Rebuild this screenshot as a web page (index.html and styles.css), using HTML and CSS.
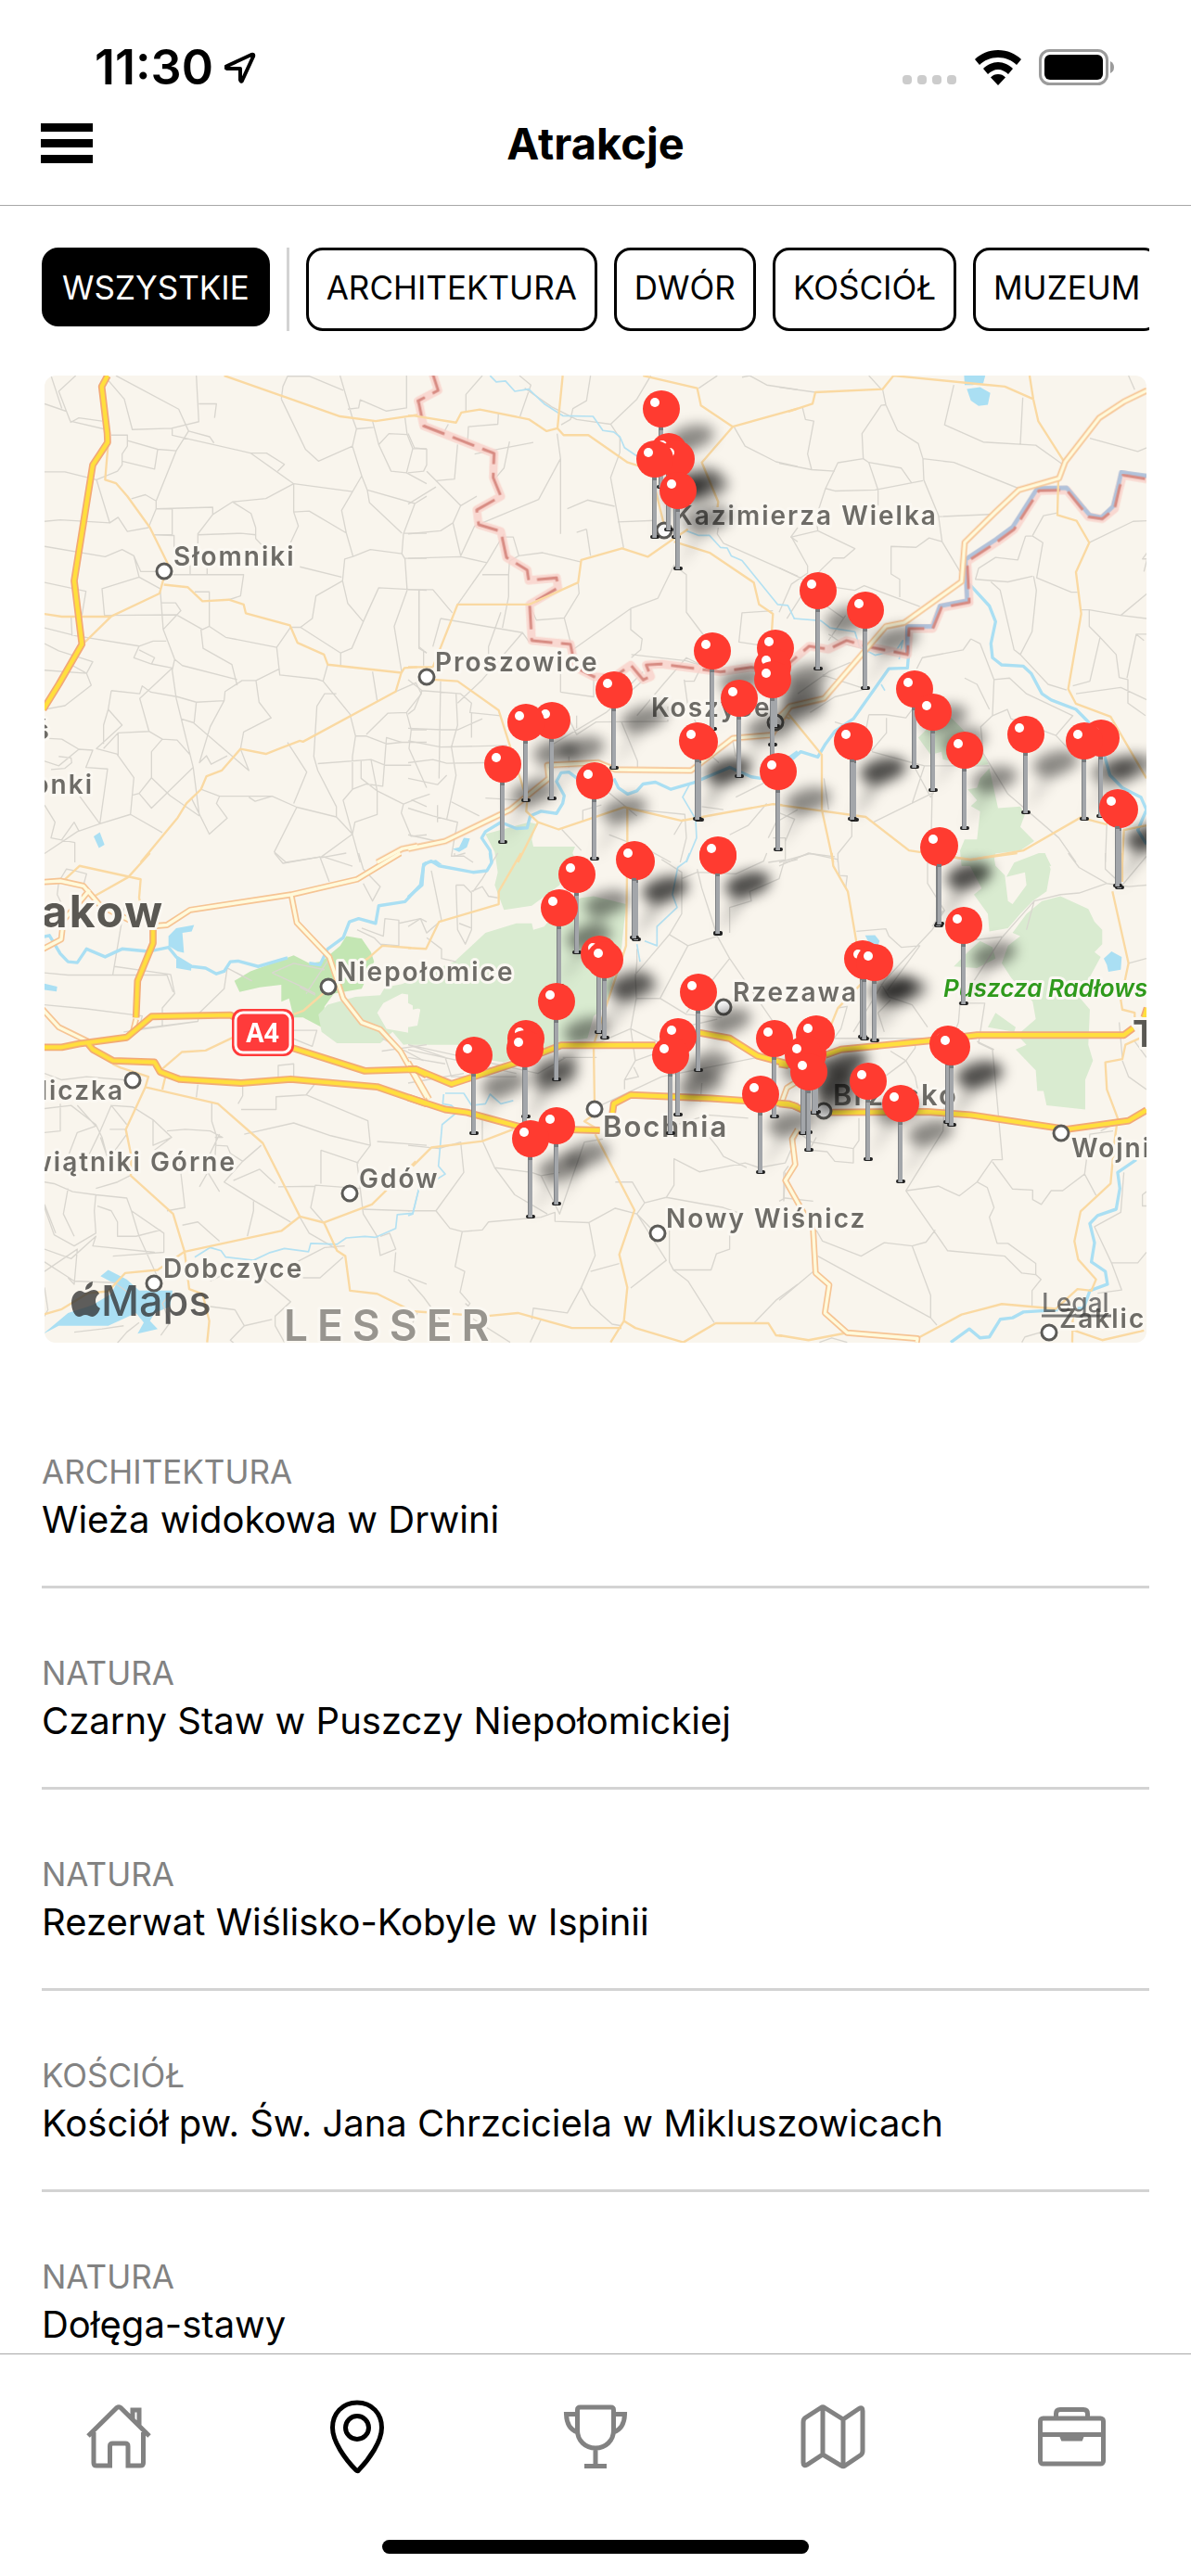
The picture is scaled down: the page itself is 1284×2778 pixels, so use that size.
FILE: index.html
```html
<!DOCTYPE html>
<html lang="pl">
<head>
<meta charset="utf-8">
<meta name="viewport" content="width=device-width, initial-scale=1">
<title>Atrakcje</title>
<link rel="stylesheet" href="styles.css">
</head>
<body>
<div class="app">
  <header class="header">
    <div class="status">
      <div class="status-left">
        <span class="time">11:30</span>
        <svg class="icon-location" viewBox="0 0 34 34" aria-hidden="true"><path d="M2 15.500L29 3Q32 2 31 5L19 31Q18 33 17 30V18H3Q0 17 2 15.500z"/></svg>
      </div>
      <div class="status-right">
        <div class="dots"><i></i><i></i><i></i><i></i></div>
        <svg class="icon-wifi" viewBox="0 0 52 38" aria-hidden="true">
          <path d="M26 0C36 0 45 4 51 10L46 16C41 11 34 8 26 8S11 11 6 16L1 10C7 4 16 0 26 0z"/>
          <path d="M26 13C32 13 38 16 42 20L37 26C34 23 30 21 26 21S18 23 15 26L10 20C14 16 20 13 26 13z"/>
          <path d="M26 26C29 26 32 27 34 29.500L26 38L18 29.500C20 27 23 26 26 26z"/>
        </svg>
        <svg class="icon-battery" viewBox="0 0 82 40" aria-hidden="true">
          <rect x="1.500" y="1.500" width="72" height="36" rx="10" fill="none" stroke="#9b9b9b" stroke-width="3"/>
          <rect x="6" y="6" width="63" height="27" rx="6"/>
          <path d="M77 13Q81 15 81 19.500T77 26z" fill="#9b9b9b"/>
        </svg>
      </div>
    </div>
    <div class="nav">
      <button class="menu" type="button" aria-label="Menu"><i></i><i></i><i></i></button>
      <h1>Atrakcje</h1>
    </div>
  </header>

  <main class="main">
    <div class="filters">
      <button class="chip chip-active" type="button">WSZYSTKIE</button>
      <span class="divider"></span>
      <button class="chip" type="button">ARCHITEKTURA</button>
      <button class="chip" type="button">DWÓR</button>
      <button class="chip" type="button">KOŚCIÓŁ</button>
      <button class="chip" type="button">MUZEUM</button>
    </div>

    <svg class="map" viewBox="48 405 1188 1043" role="img" aria-label="Mapa atrakcji">
      <defs>
        <g id="motorways">
          <path transform="translate(40 400) scale(.3333 .338)" d="M228 15L209 50L227 200L228 228L180 300L120 670L145 872L70 1000L20 1080"/>
          <path transform="translate(40 920) scale(.3333 .3444)" d="M0 608H80L135 597L290 577L370 512L625 507L650 520M825 610L1060 682L1225 677L1260 695M165 597L180 615L245 650L380 655L398 685L460 708L660 720L820 708L1100 732L1170 755L1260 785M375 240V282L325 400L320 515"/>
          <path transform="translate(440 920) scale(.3333 .3444)" d="M0 677H25L140 723L340 660L495 602H800M940 562L1040 580L1130 635L1260 668M0 765L120 803L190 812L380 862L620 868M660 820L665 785L720 757L980 768L1230 785L1260 795"/>
          <path transform="translate(840 920) scale(.3333 .3444)" d="M150 632L200 615L480 588L640 570H1115L1145 548M1180 515L1190 485M0 785L45 790L100 815M165 812L480 810L620 820L930 865L1130 838L1188 805M0 660L30 665"/>
        </g>
        <g id="trunks">
          <path transform="translate(40 400) scale(.3333 .338)" d="M1100 1568L1180 1525L1230 1515"/>
          <path transform="translate(440 400) scale(.3333 .338)" d="M0 1525L120 1500L330 1400L455 1300L450 1258L615 1250L670 1272L915 1275L1050 1172L1175 1162L1235 1070"/>
          <path transform="translate(840 400) scale(.3333 .338)" d="M0 1105L35 1070L145 1045L345 815L405 803L590 672L600 547L700 450L775 380L905 343L925 290L1035 150L1115 98L1190 62"/>
          <path transform="translate(40 920) scale(.3333 .3444)" d="M0 92L75 87L150 103L205 165L300 210M0 310L78 270L85 210L140 150L170 115M385 228L420 225L495 178L822 130L1035 82L1175 0M822 130L840 218L945 325L990 455L1050 530L1110 552L1175 620L1260 765M0 470L70 545L165 590M320 520L310 560"/>
          <path transform="translate(440 920) scale(.3333 .3444)" d="M0 655L68 770"/>
          <path transform="translate(840 920) scale(.3333 .3444)" d="M60 865L42 895L52 975L20 1025L110 1180L118 1315L162 1352L148 1440L220 1502L447 1520L445 1532M10 775L25 735L50 720"/>
        </g>
        <g id="border-line">
          <path transform="translate(440 400) scale(.3333 .338)" d="M80 10L97 62L33 95L50 175L278 263L275 340L300 400L222 443L228 490L300 512L318 595L385 635L390 668L480 660L485 692L393 745L400 860L525 872L540 945L600 975L660 980L720 938L760 985L785 975L770 938L820 935L1010 960L1110 945L1200 960"/>
          <path transform="translate(840 400) scale(.3333 .338)" d="M0 960L97 878L160 888L218 860L290 880L415 905L420 822H497L525 755L615 738L608 608L705 545L760 505L840 382L930 380L1000 465L1045 472L1085 440L1100 375L1112 332L1190 345"/>
        </g>
        <g id="pin">
          <rect x="-5" y="82" width="10" height="4" rx="2" fill="#222"/>
          <rect x="-3" y="18" width="5" height="67" fill="#a3a6aa"/>
          <rect x="-3" y="18" width="1" height="67" fill="#7d8083"/>
          <rect x="-3" y="18" width="5" height="5" fill="#77797c"/>
          <circle r="20" fill="#ff3b30"/>
          <circle cx="-7" cy="-7" r="5" fill="#fff"/>
        </g>
        <g id="pin-shadow">
          <path d="M0 85L20 36L38 38z" opacity=".14"/>
          <ellipse cx="32" cy="31" rx="25" ry="13" transform="rotate(-14 32 31)" opacity=".43"/>
        </g>
        <filter id="soft" x="-5%" y="-5%" width="110%" height="110%"><feGaussianBlur stdDeviation="7"/></filter>
        <clipPath id="map-area"><rect x="48" y="405" width="1188" height="1043"/></clipPath>
      </defs>

      <g clip-path="url(#map-area)">
      <rect class="land" x="48" y="405" width="1188" height="1043"/>

      <g class="park">
        <path transform="translate(440 400) scale(.3333 .338)" d="M250 1478L390 1440L415 1445L400 1495L410 1540L530 1535L545 1568L560 1600H290L280 1535z"/>
        <path transform="translate(840 400) scale(.3333 .338)" d="M450 1170L490 1130L545 1095L590 1140L660 1220L678 1255L640 1260L530 1240L525 1215L490 1225zM680 1268L708 1395L780 1390L795 1415L780 1455L825 1500L780 1530L700 1540L690 1580H590L585 1530L600 1495L640 1495L650 1405L620 1388L640 1370L610 1335L640 1330L650 1300zM770 1568L860 1540L880 1580z"/>
        <path class="forest" transform="translate(40 920) scale(.3333 .3444)" d="M638 400L690 370L830 320L880 345L920 340L980 290L1000 260L1050 268L1080 310L1090 340L1050 425L960 440L930 480L920 545L860 515L830 515L815 455L790 465V412L720 420L655 435z"/>
        <path fill-rule="evenodd" transform="translate(40 920) scale(.3333 .3444)" d="M910 505L940 475L1030 450L1110 445L1125 420L1180 410L1260 380V590L1185 600L1150 560L1110 595H970L920 560zM1120 470L1180 440L1215 445V490L1240 485L1235 540L1215 565L1130 550L1100 500z"/>
        <path transform="translate(440 920) scale(.3333 .3444)" d="M280 100L310 -20H540L490 100L400 165L310 178zM560 140L600 135L705 160L690 300L640 480L600 510L580 580L500 590L310 655L200 640L170 600H0V545L30 540L40 490L0 470V400L150 340L250 250L350 220L400 220L405 240L440 230L490 170z"/>
        <path transform="translate(840 920) scale(.3333 .3444)" d="M590 -10H690L700 40L730 70L740 150L755 160L800 100L795 60L735 75L760 30L840 0H860L878 50L865 120L820 150L780 190L740 235L680 245L675 190L630 130L655 110zM755 250L800 190L850 150L910 135L1000 175L1020 215L1045 240V285L1020 310L1040 325L970 450L1005 490L1000 600L1015 650L990 710V803L865 790L855 745H835L830 680L765 615L800 600L770 570L830 520L820 465L750 390L720 345L740 290L780 260zM565 355L610 310L650 275L690 295L700 330L640 360zM675 545L700 500L765 545L760 560z"/>
      </g>

      <g class="lake">
        <path transform="translate(40 400) scale(.3333 .338)" d="M183 1485L203 1472L218 1512L200 1522z"/>
        <path transform="translate(440 400) scale(.3333 .338)" d="M143 1525L165 1520L180 1490L200 1492L190 1520L165 1535zM50 1568L90 1560L110 1575z"/>
        <path transform="translate(840 400) scale(.3333 .338)" d="M598 10H668L660 40L625 45L600 45zM607 58L650 52L683 70L675 108L645 112L620 95z"/>
        <path transform="translate(40 920) scale(.3333 .3444)" d="M425 260L450 235L508 225L500 245L470 250L475 312L455 308L425 290zM450 325L500 350L498 368L450 360zM20 408L65 418L63 433L20 428zM20 1505L100 1440L180 1415L240 1380L255 1350L205 1325L230 1305L290 1335L330 1370L438 1370L430 1420L380 1440L365 1465L390 1490L325 1505L345 1470L320 1440L230 1480L70 1480z"/>
        <path transform="translate(840 920) scale(.3333 .3444)" d="M278 258L310 257L325 275L320 288L290 280zM1050 330L1075 308L1108 325L1105 365L1065 372L1060 350z"/>
      </g>

      <g class="minor">
        <path transform="translate(40 400) scale(.3333 .338)" d="M45 15L80 120M125 15L70 65L107 160L215 185M24 105L92 128M107 165L135 150L210 160M230 30L282 90L308 187L435 183L523 162L515 15M255 15L458 122L490 192L450 255L385 415V440L360 500L292 512L262 467L235 485L192 347L260 320L275 300V265L292 240V205H240M523 105H580L574 150M437 183V205L690 262L830 360L1020 385M490 192L558 210L572 230M690 262H742L800 298L778 320M292 222L390 250L450 255M390 250L380 313L275 288M24 322H90L192 347M24 480L75 475L235 485M305 408L350 395L385 415M385 440L568 435V458L520 520V575M437 440V523H380L443 525V570M520 523L660 518L707 523M568 458L632 418L740 407L830 360V450L845 495L805 580M632 418L692 455L707 500V535L760 590M830 450L880 447L1000 517L985 445L1050 335L1020 240L1033 185L1020 150L980 15M1000 517L1022 592L995 600L988 670L902 718L890 790L852 818H820L775 882L785 970L905 983L925 990M850 625L985 658M1022 592L1078 570L1180 583L1190 600L1197 700L1155 815L1180 965M1180 583L1185 520L1222 423L1260 400M1185 518H1260M1222 423L1068 380L1050 335M1068 380L1075 420L1180 518M1190 598H1260M988 670L1005 742L1055 800L1105 692L1260 700M1055 800L1018 885L982 900V940M852 818L982 900M1235 700V885L1260 900M790 90L868 250L910 288L1020 240M790 90L795 50L810 17H880L990 62M1005 122L1040 118L1045 92L1130 128L1195 118V15M1033 185L1088 180M1085 160L1105 235L1145 320L1195 325L1260 360M1105 235L1138 200L1197 203L1190 150M1197 203L1215 248L1195 325M1215 248H1260M24 560L220 593L275 570L313 590L335 640H400M313 590L330 658L398 695L408 825L445 920L437 955L450 1045L505 1265L525 1420M330 658L210 695L218 780L450 778L535 825L557 815L610 850L775 882M400 740H448L465 765L408 825M440 650H668L658 718L620 730M495 620V650M550 620V650M510 705H557V815M530 825L537 885L630 937L647 1003M24 675L158 703L145 780M24 820L125 845L330 878L375 862H418M110 785L113 845M330 878L313 915L370 935L380 915L330 890M370 935L437 948L332 1045L362 1150L262 1155L215 1205M445 920L470 940L647 985M24 870L70 893L180 928L160 965L24 955M160 965L175 1003L90 1068L24 1080M115 940L160 965M240 1020L332 1030L340 1005L368 1025L455 1040L515 1057L605 1052L608 1023L663 988H708L718 1057L757 1107L668 1152L658 1206L685 1275L505 1122L465 1110M515 1057L508 1122M708 988L785 950M605 1052L560 1135L525 1250L548 1228L563 1255L615 1228M240 1020L230 1080L275 1130L192 1205L258 1222L313 1298L302 1415L405 1473M230 1080L215 1130V1190M362 1150L405 1175L370 1215V1298L430 1355L525 1420M405 1175L453 1178L495 1225M505 1265L370 1395L330 1348L370 1298M310 1353L330 1348M262 1155V1230M24 1172L80 1175L135 1207L180 1210L158 1265L228 1270L203 1445L110 1320M135 1207L70 1260L24 1245M70 1230L110 1235L112 1250L90 1268L45 1272M302 1415L203 1445L130 1470L24 1540M24 1385L58 1440L45 1490L122 1505V1568M80 1495L120 1440L135 1468M530 1335L590 1357H760L840 1392L968 1423L1020 1478L990 1370L1020 1335V1230L1030 1165L1012 1095L925 990L940 937M590 1357L580 1380L615 1427L557 1478L500 1365M685 1360L705 1373L760 1357M840 1392L767 1535L805 1568L920 1550L1020 1478L1045 1568M830 1380L872 1280L810 1185M968 1423V1390L908 1275L895 1230L905 1070L930 1030H968M908 1253L1080 1240L1125 1258H1210M1080 1240L1100 1340L1048 1300V1245M1020 1335L1065 1318L1118 1325L1130 1170L1180 1185H1260M1030 1165H1065L1130 1190L1180 1185M1065 1160L1135 1092L1195 1090L1210 1145L1203 1205L1260 1330M1210 1145H1260M1195 1090L1243 1030L1225 995L1160 1023M1100 1052L1085 960M1100 1340V1415L1028 1440L1020 1478M1100 1340L1185 1382L1215 1370L1260 1390M1185 1382L1178 1410L1210 1485L1260 1480M925 1550L1020 1580"/>
        <path transform="translate(440 400) scale(.3333 .338)" d="M240 15L187 75V130M360 15L397 45L362 145M590 15L577 95L533 120L525 155L495 172M377 55L465 115L545 155L655 170L740 90L785 15M655 170L685 215V260L655 340L697 565M482 200L493 280V520M493 280L422 410L215 495L170 590M215 265L300 248L405 228M292 135L290 170L195 178L192 235M328 225L310 310L280 345M130 170L118 192M0 200L20 245L60 250V300L50 320L0 325M60 320L90 350L150 345L160 235M90 350L170 430L145 485L170 590M0 425L90 370M0 520L105 510L145 485M0 598L170 593L255 612M170 430L222 400M160 745L255 612L310 520M300 530H340L358 590L328 607L325 650H240M325 650V720L305 820M358 590L435 580L560 610M515 440L580 412L668 432M577 505L590 590M493 280M545 515L577 505M678 482L800 477M550 675L553 710L505 788L525 865M505 788L415 795L392 745M0 698H80L143 772M35 700V880L60 900M50 890V940M105 790L80 880M105 790L370 835L392 865M370 835L240 985L160 1060M300 770L260 880V940M525 895L720 758L808 725L860 620L900 650V770L965 855M720 758V825L757 855L752 890L722 915M722 905L900 925L1010 960M1055 180L1090 240L1190 290L1260 305M940 55L1000 15M1080 20L1105 15L1160 45L1260 60M985 435L1010 460L1000 520L1020 550L1260 655M1180 765L1080 772L1070 865L1170 880M1260 500L1238 530L1260 545M600 945V1040L493 1025M493 950V1025M640 990L720 1000L760 960M757 990L640 1090L470 1190M893 985L905 1070L940 1140M893 990H925L950 940L900 915L825 1000L740 1100M840 1070V1118L608 1120L545 1160L515 1100M690 1120L742 1245V1265M0 985L45 1020L20 1080L0 1095M45 1020L170 1030L205 1060L200 1090L300 1100M155 1030L160 1130L140 1200L155 1290L125 1430M105 990L100 1300M0 1140L110 1145H160L240 1110M0 1180L105 1200L320 1195M205 1090V1170M0 1250L80 1240L125 1252L250 1250M0 1300L95 1320L125 1290M95 1385V1440M0 1395L80 1420L160 1440L150 1490L90 1500L0 1480M140 1375L230 1420M250 1363L375 1370M10 1370L70 1350M545 1100V1140M520 1230V1265M630 1330L740 1420M565 1435V1402L625 1385M497 1463L560 1530M740 1400L895 1415L900 1490L880 1568M650 1480L780 1530L850 1568M950 1390L1020 1400M890 1430L860 1480M1165 1490L1190 1440L1260 1400M1160 1380L1100 1450L1040 1480M1180 1490H1220V1560L1165 1568M950 1200L1005 1250M1050 1180L1060 1230M150 1490L140 1548H180L210 1568M1060 1360L1120 1330L1180 1300"/>
        <path transform="translate(840 400) scale(.3333 .338)" d="M0 52L117 68M335 60L345 108L383 190L450 232L465 280L468 348L515 460L527 545L585 640M345 108L330 110L268 200L272 280L190 293L150 375L120 465L125 510L245 567L210 597H175L135 635L90 690L25 790M272 280L290 292L395 310L428 357M290 292L320 380V430M150 375L180 383L310 380L465 350M75 115L85 155L112 160L92 265L105 315L0 295M105 315L180 320M465 280L565 292L775 375M565 45L535 172L660 227L830 237L917 298M788 85L780 235M1005 215L1160 257L1190 245M290 15L330 58M820 525L855 462L900 453M797 527H820L853 548L833 660L945 706H965M797 527L772 603L700 595L645 630L635 665L740 673L820 655M685 673L715 700L760 890L780 905L818 832L832 700L823 655M515 465L697 457M527 545L485 533L443 563L362 560V648L390 665V722M125 510L40 530L92 622V645L40 680L0 770M0 628L110 680L245 700L275 685L455 752M1003 548L1145 480L1190 478M973 762H1003L1105 780L1190 790M1105 780L1190 710M1003 762V815L1038 850L1005 990L950 1005M1038 850L1090 905L1100 978L1128 985V1060L1185 1100M1190 840L1155 840L1125 980M1155 840L1180 860M780 905L870 1000L930 1018M695 985L745 980L800 1030L950 1100L895 1163L930 1200M695 985L690 1100L738 1080L750 1110L895 1163M690 1100L652 1135L660 1220L740 1350L905 1490L960 1568M620 855L650 870L695 985M620 855L595 890L463 915L445 950M290 1097H345L410 1107L430 1080M290 1097L280 1150L180 1120M347 1107V1155L300 1210L215 1230M300 1215L430 1250L470 1260H680M430 1250L490 1360L500 1345M470 1260L430 1380M500 1345L305 1440M495 1345L490 1568M60 1030L160 960L230 930M160 840L205 870L290 890M140 970L280 1015L180 1040L100 1090M145 745L210 790M215 780L160 860M145 1300L160 1400M235 1420V1485L190 1540V1568M1060 1440L1055 1568M1190 580L1175 600H1190M960 1030L1105 1010L1190 1050M1130 15L1150 60M0 1568L100 1540L180 1550M20 1500L50 1430L0 1410M1190 600L1180 640M680 1080L640 1000L600 980"/>
        <path transform="translate(40 920) scale(.3333 .3444)" d="M65 130L70 90L95 50L120 55L160 65L150 100M65 130L85 170M768 0L795 32L915 12L945 90M915 15L1000 0M1040 0L1055 50L1110 105L1085 150L1055 95M285 150L245 380M250 355L432 380L445 440L405 485V540M24 375L100 382H420L440 435M24 475L155 487L340 510L330 550L520 527L525 500L605 425L615 360L695 400M280 560L520 527M1035 240L1090 265L1115 290M1050 235L1120 260L1125 205L1170 210V290L1110 285M1170 220L1240 205L1260 215M870 440L945 330M850 420L900 445M760 375L860 420L900 440M760 375L830 345L930 365M800 555H905L890 605L825 580M780 700V665L830 660V700M665 725V760L650 785M520 725L515 765M565 780V840L580 885L575 960L525 1045M660 803H773V763L870 757L905 715M870 757L1070 838L1078 915L1035 970L1045 1050L1055 1130L1100 1200L1110 1260L1160 1240L1140 1190L1110 1200M1078 915L950 885L830 845L670 880M1100 903L1260 915M918 930V1035M918 930L1040 970M1045 1050L900 1040L885 1110L930 1160M1050 1115L1205 1120M780 1045L900 1043M24 690L80 710L160 700L280 710M75 785V870L24 875M24 800L110 790L190 850L210 890L235 980M130 790L190 855L130 875L100 950M240 790L310 795L375 835L435 890L375 915V835M160 960L200 880L240 790L290 850M235 865H285L290 880L230 960L205 890M435 890L380 930M420 870L480 865L560 870L600 890L575 890M575 915L615 917L625 940L665 965L725 915M665 965L605 1030L705 1090L820 1155M635 1025L720 990L770 1035M700 1090V1120L680 1200M460 960L478 1110L420 1120M24 1030L55 1035L115 1060L190 1070L185 1120L190 1190L120 1230L55 1195L20 1100M190 1050L260 1030L300 1010M190 1070L290 1080L305 1120L410 1190V1250L245 1262M195 1105L240 1120L260 1155V1200H320L400 1180M470 1165L520 1155L560 1190L590 1215M24 1240L110 1270L190 1200L180 1230L380 1250M100 1050L85 1130L120 1200M24 1310L130 1240L120 1350L100 1330M24 1280L120 1340L250 1345L300 1380M430 1380L405 1410L430 1470L400 1510M850 1140L880 1190L970 1240M690 1280L740 1340L820 1405L770 1450V1480L800 1532M560 1340L680 1285M820 1290L930 1235L995 1230M860 1330H915L990 1265M670 1480L760 1460M670 1480L625 1525L690 1580M670 1480L640 1430L560 1420M1160 1250L1155 1310L1260 1350M120 1500L210 1490L280 1480M250 1545L290 1500L330 1470M24 1360L35 1430L24 1450M1115 580L1250 650M1115 620L1260 600M305 1120L330 1200L400 1350M24 1100L60 1190M590 880L540 980L590 1060"/>
        <path transform="translate(440 920) scale(.3333 .3444)" d="M75 55L108 210L60 250L40 205L0 230M155 100L160 240L185 285L205 240V125L180 100H155M205 120L240 105L260 135L290 140M165 220L205 235M60 265L108 300V330L155 340M150 0V10L185 0M290 0L240 80L210 120M820 20L885 60V190L845 255L735 380L738 455H815L905 290L845 255M815 455L900 505L1015 515M905 290L1000 260L1040 330L1260 640M1040 330L900 500M740 300V340L735 400M738 455L720 550L600 600M720 550L735 650L700 710V740M720 550L870 620M500 640H610M510 640L420 690L0 600M735 650L820 620M700 710L745 700L730 670M600 800L820 700L1130 640M935 50L950 110L1000 260M885 80L935 60L1060 65L1150 25L1160 0M1040 250V170L1110 150L1105 120L1200 80L1215 30L1260 20M0 600L120 640L140 700H350M0 615L350 690M0 720L180 690M0 640L120 660M240 820V900L280 985L345 1070L450 1130M280 985L400 1000L430 1010L490 1130L570 905L630 895M490 1000L430 1010M0 915L100 925L170 905L180 1000L90 1120L0 1120M90 1120L135 1175L175 1185L240 1180L260 1155L430 1140L475 1125V1153L585 1157L605 1260L560 1360L515 1440L405 1425L400 1460M175 1185L152 1295L183 1310L168 1375L200 1410L180 1440M585 1157L670 1112L740 1130L800 1190M560 1360L590 1415L660 1475L690 1480M590 1310L683 1285M670 1030H725L765 1095L740 1130L835 1275L720 1362M765 1095L835 1078L1020 1110L1080 1130M835 1078L860 1040V957L942 998L1090 970L1135 985L1220 970L1260 880M1000 920L1020 950L1095 985M975 890L1000 920M845 1180V1280L858 1305H980L997 1255L1040 1240V1180M858 1305L905 1340L990 1470M1120 1470L1190 1400L1260 1350M1215 1090V1000L1230 980M870 850L970 820L1100 830M180 1440L330 1532M220 1440L185 1410M395 1532L430 1460M0 1335L50 1390L110 1470M0 1500L30 1440M950 720L945 780M820 560L1000 520"/>
        <path transform="translate(840 920) scale(.3333 .3444)" d="M0 40L95 0L190 20L195 70L220 72L215 110M480 0V95L535 180L495 240L340 400L240 560M250 245L345 237L355 260L395 295L455 290L350 430M330 410L355 450L430 475L480 545M360 460L320 500L340 560M160 580H640M360 620L410 650L440 610V580M410 650L440 700L450 750M410 650L300 730M585 470L580 530L560 580M580 470H665L645 595L690 615L700 720L722 960H690L640 1030L583 1073L515 1043L412 1057M640 590L695 615M690 967L755 1052L820 1055V1085L848 1100L880 1057H917L988 1005L1005 880L1080 870M988 1005L1025 1072M640 1030L673 1047L695 1110L680 1140L705 1222H740L830 1285V1320L785 1315L730 1262L545 1245L410 1057L530 870L535 770M505 1180L475 1218L430 1230L340 1220L265 1262L140 1215L55 1070M430 1230L490 1385V1455L510 1478M125 1262L490 1455M830 1320L847 1335L818 1370V1420M1188 1250L1160 1283H1075L1020 1170L1105 1125L1115 1000M1075 1283L1108 1368L1030 1378M1188 1060L1175 1070V1105H1188M600 445L720 265L825 150L910 130L970 125L1060 95L1130 105L1188 100M600 275L720 262M825 150L800 240M1055 0V50L1110 100L1188 10M1060 95L970 45L935 0M1188 330L1130 345M1110 650L1130 700L1188 740M1188 640L1150 590M900 1505L840 1502L795 1515L785 1532M1100 530L1110 640M0 1090L20 1080L110 1090M15 1085L20 1000M70 880L105 905L240 925L258 900V830M240 925V970L180 965L155 935L100 930M120 890L100 925M0 1400L110 1310M1040 870L1100 840M190 485L220 480L200 550L170 590M130 1532L170 1518L220 1532M530 180L495 230"/>
      </g>

      <g class="stream">
        <path transform="translate(440 400) scale(.3333 .338)" d="M265 15L285 35L315 32L345 65L390 58L440 105L500 143L598 145L630 190L665 195L685 210L700 245L745 275M900 510L940 525H975L1010 563L1032 565L1045 590L1080 605L1195 745L1228 748L1250 792M910 1320L888 1360L930 1430L933 1490L900 1568"/>
        <path transform="translate(840 400) scale(.3333 .338)" d="M47 790L135 797L165 820L245 832L260 880L310 907L380 890L400 860L388 920M330 1000L342 1020"/>
        <path transform="translate(40 920) scale(.3333 .3444)" d="M510 1265L560 1235L595 1245L610 1265L700 1275L750 1252L800 1238L878 1248L885 1222L970 1225L1000 1205L1060 1200L1095 1203L1160 1175L1165 1132L1215 1128L1235 1050"/>
        <path transform="translate(440 920) scale(.3333 .3444)" d="M910 0L900 25L872 45L855 130L870 170L805 230V290L765 275M740 285L750 340M120 752H180L205 790L250 785L265 755L300 785L340 775M115 755L112 785L140 790L160 810L110 850L98 980L120 1005L95 1020M35 1050L15 1130L0 1135"/>
      </g>
      <g class="river">
        <path transform="translate(440 400) scale(.3333 .338)" d="M270 1568L265 1530L238 1490L250 1470L300 1440L350 1460L385 1458L395 1420L430 1405L480 1412L500 1380L505 1355L480 1310L495 1282L520 1280L560 1310M665 1300L680 1330L710 1350L740 1340L760 1318L800 1312L850 1335L920 1315L1040 1265L1110 1295L1140 1300L1260 1215"/>
        <path transform="translate(840 400) scale(.3333 .338)" d="M418 820L420 890L415 948L355 950L240 1110L180 1150L150 1190L125 1232L70 1215L40 1240M615 680L680 750L700 800L685 870L690 915L720 938L790 942L815 965L850 1030L880 1050L960 1080L1000 1120L1050 1220L1070 1290L1110 1330L1170 1360L1188 1400L1160 1465L1188 1510"/>
        <path transform="translate(40 920) scale(.3333 .3444)" d="M20 262L40 258L75 315L100 340L130 343L160 300L220 325L275 300L360 308L425 295L450 325L500 355L545 360L580 378L605 370L625 340L650 338L715 355L810 328M880 345L915 350L940 300L990 265L1010 215L1040 205L1095 220L1105 165L1190 152L1240 100L1250 40L1260 30"/>
        <path transform="translate(440 920) scale(.3333 .3444)" d="M0 138L45 100L50 35L75 25L100 40L210 60L255 55L270 30L265 0"/>
        <path transform="translate(840 920) scale(.3333 .3444)" d="M1155 960L1095 1000L1102 1050L1090 1115L1030 1135L1005 1160L1020 1220L1010 1280L1055 1310L1062 1350L1005 1370L985 1425L790 1437L755 1455L715 1460L680 1515L650 1518L615 1490L555 1532"/>
      </g>

      <use href="#border-line" class="border-halo"/>
      <path class="border-river" transform="translate(840 400) scale(.3333 .338)" d="M414 902L414 815H497L520 750L608 733L602 602L700 538L755 498L835 374L930 373L1004 460L1042 468L1080 432L1096 370L1106 324L1190 335"/>
      <use href="#border-line" class="border-dash"/>

      <g class="road">
        <path transform="translate(40 400) scale(.3333 .338)" d="M605 15L980 145L1095 160L1230 140M230 230L220 347L255 358L292 400L365 500L425 620M410 660L396 710L240 783L155 865M20 775L80 784H240M410 682L487 690L535 735L620 730L668 745L675 773L818 812L842 867L928 905L940 937L1178 963L1188 948L1230 945M1178 963L1160 1023L860 1183L850 1180L740 1222L658 1206L597 1275L548 1293L530 1335L483 1380L455 1425L335 1568"/>
        <path transform="translate(440 400) scale(.3333 .338)" d="M0 143H20L155 165L172 133L232 123L392 155L448 192L483 183L500 15M483 183L503 205H583L710 292L800 320V380L830 500M760 15L935 55L947 110L1050 178L1260 120M1050 178L950 292L1003 418L1000 440M80 945L160 745H392L550 675L560 603L692 566L775 593L860 535L905 505M860 545L975 580L1118 675L1135 745L1180 775L1175 850M0 945H80M80 985L160 990L293 1083L385 1370L382 1405L420 1440L487 1463L700 1392L885 1435L1180 1382L1210 1385M709 1392V1568M420 1440L355 1568M1210 1100L1235 1110"/>
        <path transform="translate(840 400) scale(.3333 .338)" d="M30 130L108 105L117 68L335 58L370 15L730 50L822 90L838 160L925 295M810 15L822 90M903 345L900 460L962 478L1003 548L960 642L977 775L935 1015L960 1062L1072 1103L1188 1300M30 1095L138 1225V1400L175 1568M0 1385L280 1423L420 1530L620 1560L790 1530L975 1425L1060 1447M1110 1568L1115 1465L1188 1450"/>
        <path transform="translate(40 920) scale(.3333 .3444)" d="M85 87L137 40L335 82L330 140L345 210M295 75L365 0M185 135L295 75M400 680L468 623L545 618L635 577M830 505L862 493L925 440L1000 370L1070 330L1117 290L1210 297M245 660L270 672L360 700L350 733L585 785L730 908L850 1138L928 1157L1083 1100L1225 965M350 733L287 865L305 950L303 1010L440 1130L477 1248L492 1365L535 1380L557 1465L550 1532M477 1248L790 1183L850 1138M928 1157L970 1245L997 1262L1012 1370L1100 1380L1225 1440M405 740L415 700M20 1445L80 1428L165 1378L230 1372L285 1315L390 1305L477 1248"/>
        <path transform="translate(440 920) scale(.3333 .3444)" d="M365 0L293 120V160L100 215L58 300L0 297M709 0L705 290L640 480L600 600L603 780M620 868L570 840L600 820M605 880L732 1118L683 1257L709 1360L698 1465L735 1487L890 1532L995 1472H1165L1190 1510L1210 1512M698 1465L655 1532M15 980L75 922L240 902L340 865M20 1435L250 1450L355 1440L530 1487H690"/>
        <path transform="translate(840 920) scale(.3333 .3444)" d="M170 0L175 40L222 120L252 290L265 410L190 485L165 545L155 610M460 0L620 20L770 0M1110 0V90M1078 120L1130 345L1105 460L1110 490L1150 500V520M1188 570L1120 600L1110 645L1055 655L1060 740L1095 830L1085 900L1072 1035L975 1122L955 1215L967 1272L1025 1335L1010 1370L965 1365L895 1427L720 1412L590 1445L450 1518M0 1510L95 1525L220 1502M948 1532L950 1440M940 1490L1045 1525L1180 1495"/>
      </g>

      <use href="#trunks" class="trunk-case"/>
      <use href="#trunks" class="trunk"/>
      <use href="#motorways" class="motorway-case"/>
      <use href="#motorways" class="motorway"/>

      <g class="badge">
        <rect x="250" y="1088" width="67" height="51" rx="11" fill="#ff3b3b"/>
        <rect x="254" y="1092" width="59" height="43" rx="8" fill="none" stroke="#fff" stroke-width="3"/>
        <text x="283" y="1124" text-anchor="middle">A4</text>
      </g>

      <g class="towns">
        <circle cx="177" cy="616" r="8"/><circle cx="716" cy="572" r="8"/><circle cx="460" cy="730" r="8"/>
        <circle cx="836" cy="779" r="8"/><circle cx="354" cy="1064" r="8"/><circle cx="143" cy="1165" r="8"/>
        <circle cx="377" cy="1287" r="8"/><circle cx="166" cy="1384" r="8"/><circle cx="641" cy="1196" r="8"/>
        <circle cx="780" cy="1086" r="8"/><circle cx="709" cy="1330" r="8"/><circle cx="888" cy="1198" r="8"/>
        <circle cx="1144" cy="1222" r="8"/><circle cx="1131" cy="1437" r="8"/>
      </g>

      <g class="labels">
        <text x="187" y="610">Słomniki</text>
        <text x="727" y="566">Kazimierza Wielka</text>
        <text x="469" y="724">Proszowice</text>
        <text x="702" y="773">Koszyce</text>
        <text x="55" y="797" text-anchor="end">ś</text>
        <text x="101" y="856" text-anchor="end">onki</text>
        <text x="363" y="1058">Niepołomice</text>
        <text x="134" y="1186" text-anchor="end">liczka</text>
        <text x="255" y="1263" text-anchor="end">wiątniki Górne</text>
        <text x="387" y="1281">Gdów</text>
        <text x="176" y="1378">Dobczyce</text>
        <text x="790" y="1080">Rzezawa</text>
        <text x="718" y="1324">Nowy Wiśnicz</text>
        <text x="1155" y="1248">Wojni</text>
        <text x="1142" y="1432">Zaklic</text>
        <text class="town-large" x="650" y="1226">Bochnia</text>
        <text class="town-large" x="898" y="1192">Brzesko</text>
        <text class="city" x="177" y="1000" text-anchor="end">akow</text>
        <text class="city-medium" x="1221" y="1129">T</text>
        <text class="region" x="306" y="1446">LESSER</text>
        <text class="nature" x="1017" y="1075">Puszcza Radłows</text>
      </g>

      <g class="brand">
        <path d="M92 1394C95 1394 97 1391 101 1391Q105 1391 107 1395Q103 1398 103 1403Q103 1408 108 1411Q105 1419 100 1420C97 1420 95 1418 92 1418S88 1420 85 1420C80 1420 77 1411 77 1405C77 1397 82 1392 86 1392C89 1392 90 1394 92 1394zM92 1391Q92 1384 100 1382Q100 1390 92 1391z"/>
        <text x="109" y="1419">Maps</text>
      </g>
      <a href="#legal" class="legal"><text x="1123" y="1415">Legal</text><path d="M1123 1419H1198"/></a>

      <g id="shadows" filter="url(#soft)"></g>
      <g id="pins"></g>
      </g>
    </svg>

    <ul class="list">
      <li><a href="#wieza"><span class="category">ARCHITEKTURA</span><span class="name">Wieża widokowa w Drwini</span></a></li>
      <li><a href="#czarny-staw"><span class="category">NATURA</span><span class="name">Czarny Staw w Puszczy Niepołomickiej</span></a></li>
      <li><a href="#rezerwat"><span class="category">NATURA</span><span class="name">Rezerwat Wiślisko-Kobyle w Ispinii</span></a></li>
      <li><a href="#kosciol"><span class="category">KOŚCIÓŁ</span><span class="name">Kościół pw. Św. Jana Chrzciciela w Mikluszowicach</span></a></li>
      <li><a href="#dolega"><span class="category">NATURA</span><span class="name">Dołęga-stawy</span></a></li>
    </ul>
  </main>

  <footer class="footer">
    <nav class="tabs">
      <a href="#start" aria-label="Start"><svg viewBox="0 0 90 90"><path d="M12 44L43 13.500Q45 12 47 13.500L78 44M60 26V16H67V34M18 40V73Q18 76 21 76H35.500V55Q35.500 52 38.500 52H52Q55 52 55 55V76H68Q71.500 76 71.500 73V40"/></svg></a>
      <a href="#atrakcje" class="active" aria-label="Atrakcje" aria-current="page"><svg viewBox="0 0 90 90"><path d="M45 8C61 8 71.500 20 71.500 35C71.500 50 58 69 46.500 81Q45.500 82.500 44 81C32 69 18.500 50 18.500 35C18.500 20 29 8 45 8z"/><circle cx="45" cy="35" r="12.500"/></svg></a>
      <a href="#ranking" aria-label="Ranking"><svg viewBox="0 0 90 90"><path d="M25.500 16Q25.500 13 28.500 13H61.500Q64.500 13 64.500 16V38C64.500 49 56 57 45 57S25.500 49 25.500 38zM25.500 20.500H13.500Q14 36 25.500 40M64.500 20.500H76.500Q76 36 64.500 40M45 57V76M33 76.500H57"/></svg></a>
      <a href="#mapa" aria-label="Mapa"><svg viewBox="0 0 90 90"><path d="M12 29Q12 26 14 24.500L31 13.500Q33 12 35 13.500L55 26L72 14.500Q76 12 76 17V60Q76 63 74 64.500L57 76Q55 77.500 53 76L33 64L16 75Q12 77 12 73zM33 14V64M55 26V76"/></svg></a>
      <a href="#oferty" aria-label="Oferty"><svg viewBox="0 0 90 90"><rect x="10.500" y="25" width="68" height="49" rx="3"/><path d="M10.500 42.500H78.500M27.500 25V20Q27.500 15.500 32 15.500H57Q61.500 15.500 61.500 20V25"/><path d="M34 44.500L35 47H54L55 44.500z"/></svg></a>
    </nav>
    <div class="home-indicator"></div>
  </footer>
</div>
<script src="map.js"></script>
</body>
</html>
```
FILE: styles.css
```css
* {
  box-sizing: border-box;
}

body {
  margin: 0;
  background: #fff;
  color: #000;
  font-family: Inter, "Liberation Sans", sans-serif;
}

button {
  font: inherit;
  color: inherit;
  cursor: pointer;
}

a {
  color: inherit;
  text-decoration: none;
}

.app {
  display: flex;
  flex-direction: column;
  height: 100vh;
}

/* Header */

.header {
  flex: none;
  border-bottom: 1px solid #a8a8a8;
}

.status {
  display: flex;
  justify-content: space-between;
  align-items: center;
  padding: 44px 82px 0 102px;
}

.status-left,
.status-right,
.dots {
  display: flex;
  align-items: center;
}

.status-left {
  gap: 12px;
}

.time {
  font-size: 52px;
  line-height: 58px;
  font-weight: 600;
}

.icon-location {
  width: 34px;
  height: 34px;
  fill: none;
  stroke: #000;
  stroke-width: 4;
  stroke-linejoin: round;
}

.dots {
  gap: 6px;
  align-self: flex-end;
  padding-bottom: 2px;
}

.dots i {
  width: 10px;
  height: 10px;
  border-radius: 4px;
  background: #ccc;
}

.icon-wifi {
  width: 52px;
  height: 38px;
  margin: 0 18px 0 19px;
}

.icon-battery {
  width: 82px;
  height: 40px;
}

.nav {
  display: grid;
  grid-template-columns: 1fr auto 1fr;
  align-items: center;
  height: 119px;
  padding: 0 44px 14px;
}

.menu {
  display: flex;
  flex-direction: column;
  gap: 8px;
  width: 56px;
  padding: 0;
  border: 0;
  background: none;
}

.menu i {
  height: 9px;
  background: #000;
}

h1 {
  margin: 0;
  font-size: 47px;
  line-height: 56px;
  font-weight: 700;
}

/* Content */

.main {
  flex: 1;
  min-height: 0;
  padding: 45px 45px 0;
  overflow-y: auto;
  scrollbar-width: none;
}

.filters {
  display: flex;
  align-items: flex-start;
  gap: 18px;
  overflow-x: auto;
  scrollbar-width: none;
}

.chip {
  flex: none;
  padding: 18px 19px 21px;
  border: 3px solid #000;
  border-radius: 18px;
  background: #fff;
  font-size: 35px;
  line-height: 45px;
}

.chip-active {
  padding-bottom: 16px;
  background: #000;
  color: #fff;
}

.divider {
  flex: none;
  align-self: stretch;
  width: 3px;
  background: #d3d3d3;
}

.map {
  display: block;
  width: calc(100% - 6px);
  margin: 48px 3px 48px;
  border-radius: 12px;
}

.list {
  margin: 0;
  padding: 0;
  list-style: none;
}

.list li {
  border-bottom: 3px solid #d3d3d3;
}

.list a {
  display: flex;
  flex-direction: column;
  padding: 68px 0 42px;
}

.category {
  color: #828282;
  font-size: 35px;
  line-height: 46px;
}

.name {
  font-size: 40px;
  line-height: 58px;
}

/* Map */

.land { fill: #f9f5ed; }
.park { fill: #d9ebd0; }
.forest { fill: #c3e6b3; }
.lake { fill: #aadff3; }

.minor,
.road,
.stream,
.river,
.border-halo,
.border-dash,
.border-river,
.trunk,
.trunk-case,
.motorway,
.motorway-case {
  fill: none;
  stroke-linejoin: round;
}

.minor { stroke: #d9d6cf; stroke-width: 4; }
.road { stroke: #fad9a2; stroke-width: 7; }
.stream { stroke: #b4e1f2; stroke-width: 5; }
.river { stroke: #aadff3; stroke-width: 10; }
.border-halo { stroke: #f9d3cb; stroke-width: 27; opacity: .85; }
.border-river { stroke: #b1c2da; stroke-width: 14; }
.border-dash { stroke: #d78b82; stroke-width: 9; stroke-dasharray: 75 28; }
.trunk-case { stroke: #f6c494; stroke-width: 20; }
.trunk { stroke: #fffadb; stroke-width: 10; }
.motorway-case { stroke: #f2a877; stroke-width: 23; }
.motorway { stroke: #ffdf3d; stroke-width: 13; }

.towns {
  fill: #fff;
  stroke: #5c5b58;
  stroke-width: 3;
}

.labels {
  fill: #6e6c67;
  stroke: #fbf8f2;
  stroke-width: 6;
  stroke-linejoin: round;
  paint-order: stroke;
  font-size: 28px;
  font-weight: 600;
  letter-spacing: 2px;
}

.town-large { font-size: 31px; }
.city { fill: #5a5853; font-size: 48px; font-weight: 700; }
.city-medium { fill: #5a5853; font-size: 39px; font-weight: 700; }
.region { fill: #98958f; font-size: 46px; letter-spacing: 10px; }
.nature { fill: #2f9a1c; font-size: 26px; font-style: italic; letter-spacing: 0; }

.badge text {
  fill: #fff;
  font-family: "Open Sans", "Noto Sans", sans-serif;
  font-size: 28px;
  font-weight: 700;
}

.brand {
  fill: #333;
  opacity: .78;
  font-size: 45px;
  font-weight: 500;
}

.legal {
  fill: #444;
  stroke: none;
  opacity: .7;
  font-size: 28px;
  font-weight: 500;
}

.legal path {
  stroke: #444;
  stroke-width: 3;
}

/* Tab bar */

.footer {
  flex: none;
  border-top: 1px solid #a8a8a8;
  background: #fff;
}

.tabs {
  display: grid;
  grid-template-columns: repeat(5, 1fr);
  justify-items: center;
  padding: 44px 0 66px;
  color: #828282;
}

.tabs a {
  display: block;
  height: 90px;
}

.tabs .active {
  color: #000;
}

.tabs svg {
  width: 90px;
  height: 90px;
  fill: none;
  stroke: currentColor;
  stroke-width: 5;
}

.home-indicator {
  width: 460px;
  max-width: 60%;
  height: 15px;
  margin: 0 auto 24px;
  border-radius: 8px;
  background: #000;
}
```
FILE: map.js
```js
// Pin heads, back to front, in the coordinates of the map's viewBox.
const pins = [
  [713, 441], [721, 487], [729, 495], [706, 495], [731, 529],
  [882, 637], [933, 658], [836, 699], [768, 702], [833, 719], [833, 733],
  [662, 744], [986, 743], [797, 753], [1006, 768], [595, 777], [567, 779],
  [1106, 792], [1187, 796], [754, 800], [752, 799], [921, 800], [919, 799],
  [1169, 799], [1040, 809], [542, 824], [839, 832], [641, 842],
  [1207, 873], [1205, 871], [1012, 914], [1013, 912], [774, 923], [774, 922],
  [686, 929], [684, 927], [622, 943], [603, 979], [1039, 998],
  [930, 1034], [932, 1036], [646, 1029], [943, 1038], [652, 1035],
  [753, 1070], [600, 1080], [880, 1115], [878, 1116], [731, 1118],
  [835, 1120], [567, 1120], [1022, 1126], [1026, 1129], [566, 1131],
  [511, 1138], [723, 1138], [871, 1137], [866, 1138], [872, 1156],
  [936, 1166], [820, 1180], [971, 1190], [600, 1214], [572, 1228]
];

function place(id, symbol) {
  const layer = document.getElementById(id);
  for (const [x, y] of pins) {
    const use = document.createElementNS("http://www.w3.org/2000/svg", "use");
    use.setAttribute("href", symbol);
    use.setAttribute("x", x);
    use.setAttribute("y", y);
    layer.appendChild(use);
  }
}

place("shadows", "#pin-shadow");
place("pins", "#pin");
```
